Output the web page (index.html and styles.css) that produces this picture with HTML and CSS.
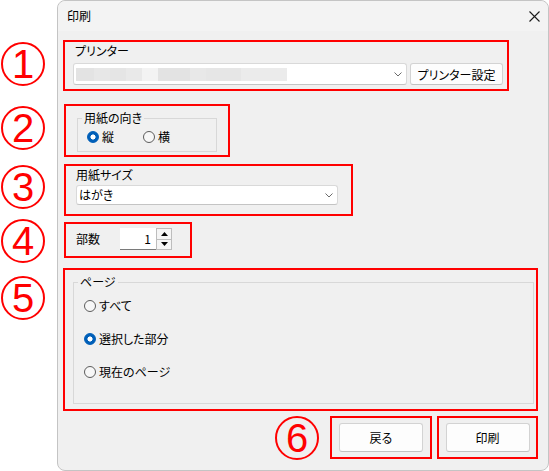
FILE: index.html
```html
<!DOCTYPE html>
<html lang="ja">
<head>
<meta charset="utf-8">
<title>印刷</title>
<link rel="stylesheet" href="styles.css">
</head>
<body>
<div class="page">
  <div class="num num-1">1</div>
  <div class="num num-2">2</div>
  <div class="num num-3">3</div>
  <div class="num num-4">4</div>
  <div class="num num-5">5</div>

  <div class="window">
    <div class="titlebar">
      <span class="title">印刷</span>
      <svg class="close" width="11" height="11" viewBox="0 0 11 11"><path d="M0.5 0.5L10.5 10.5M10.5 0.5L0.5 10.5" stroke="#1a1a1a" stroke-width="1.1" fill="none"/></svg>
    </div>

    <div class="content">
      <section class="mark s1">
        <div class="label">プリンター</div>
        <div class="row">
          <div class="combo combo-printer">
            <div class="blur"></div>
            <svg class="chev" width="8" height="5" viewBox="0 0 8 5"><path d="M0.5 0.5L4 4L7.5 0.5" stroke="#6b6b6b" stroke-width="1" fill="none"/></svg>
          </div>
          <button class="btn btn-setup">プリンター設定</button>
        </div>
      </section>

      <section class="mark s2">
        <fieldset class="group g-orient">
          <legend>用紙の向き</legend>
          <div class="hlist">
            <span class="opt"><span class="radio checked"></span>縦</span>
            <span class="opt"><span class="radio"></span>横</span>
          </div>
        </fieldset>
      </section>

      <section class="mark s3">
        <div class="label">用紙サイズ</div>
        <div class="combo combo-size">
          <span>はがき</span>
          <svg class="chev" width="8" height="5" viewBox="0 0 8 5"><path d="M0.5 0.5L4 4L7.5 0.5" stroke="#6b6b6b" stroke-width="1" fill="none"/></svg>
        </div>
      </section>

      <section class="mark s4">
        <span class="copies-label">部数</span>
        <div class="spin">
          <div class="spin-field">1</div>
          <div class="spin-btns">
            <div class="sb"><svg width="7" height="4" viewBox="0 0 7 4"><path d="M3.5 0L7 4H0Z" fill="#000"/></svg></div>
            <div class="sb"><svg width="7" height="4" viewBox="0 0 7 4"><path d="M0 0H7L3.5 4Z" fill="#000"/></svg></div>
          </div>
        </div>
      </section>

      <section class="mark s5">
        <fieldset class="group g-page">
          <legend>ページ</legend>
          <div class="vlist">
            <span class="opt"><span class="radio"></span>すべて</span>
            <span class="opt"><span class="radio checked"></span>選択した部分</span>
            <span class="opt"><span class="radio"></span>現在のページ</span>
          </div>
        </fieldset>
      </section>

      <div class="footer">
        <div class="num num-6">6</div>
        <div class="mark s6a"><button class="btn btn-action">戻る</button></div>
        <div class="mark s6b"><button class="btn btn-action">印刷</button></div>
      </div>
    </div>
  </div>
</div>
</body>
</html>
```

FILE: styles.css
```css
* { box-sizing: border-box; }

body {
  margin: 0;
  background: #ffffff;
  font-family: "Noto Sans CJK JP", "Yu Gothic UI", sans-serif;
  font-size: 12px;
  color: #000;
  font-feature-settings: "palt";
}

.page {
  position: relative;
  width: 549px;
  height: 471px;
  overflow: hidden;
}

/* annotation circles */
.num {
  width: 44px;
  height: 44px;
  border: 2px solid #ff0000;
  border-radius: 50%;
  color: #ff0000;
  font-family: "Liberation Sans", Arial, sans-serif;
  font-size: 40px;
  line-height: 40px;
  display: flex;
  align-items: center;
  justify-content: center;
  font-feature-settings: normal;
}
.num-1, .num-2, .num-3, .num-4, .num-5 { position: absolute; left: 1px; }
.num-1 { top: 42px; }
.num-2 { top: 106px; }
.num-3 { top: 165px; }
.num-4 { top: 219px; }
.num-5 { top: 276px; }
.num-6 { margin-right: 11px; }

/* window */
.window {
  margin-left: 57px;
  width: 492px;
  height: 471px;
  border: 1px solid #c4c4c4;
  border-radius: 8px;
  background: #f0f0f0;
}

.titlebar {
  height: 30px;
  display: flex;
  align-items: center;
  justify-content: space-between;
  padding: 0 8px 0 9px;
  background: #f3f3f3;
  border-radius: 8px 8px 0 0;
}
.title { line-height: 16px; }

.content { padding: 9px 0 0 5px; }

.mark { border: 2px solid #ff0000; }

.label { line-height: 16px; }

/* section 1 */
.s1 { width: 446px; height: 51px; padding: 1px 0 0 8px; }
.s1 .label { padding-left: 2px; margin-bottom: 4px; }
.row { display: flex; align-items: center; gap: 3px; }

.combo {
  background: #ffffff;
  border: 1px solid #d9d9d9;
  border-bottom-color: #c4c4c4;
  border-radius: 3px;
  display: flex;
  align-items: center;
  justify-content: space-between;
  padding: 0 4px 0 2px;
}
.combo-printer { width: 334px; height: 22px; }
.chev { margin-top: 1px; }

.blur {
  width: 211px;
  height: 13px;
  background: linear-gradient(90deg,
    #e3e3e3 0, #e3e3e3 18px,
    #e7e7e7 18px, #e7e7e7 34px,
    #e5e5e5 34px, #e5e5e5 50px,
    #e9e9e9 50px, #e9e9e9 66px,
    #f3f3f3 66px, #f3f3f3 82px,
    #e3e3e3 82px, #e3e3e3 114px,
    #e8e8e8 114px, #e8e8e8 130px,
    #e6e6e6 130px, #e6e6e6 165px,
    #ebebeb 165px, #ebebeb 211px);
}

.btn {
  font: inherit;
  color: #000;
  background: #fdfdfd;
  border: 1px solid #d3d3d3;
  border-bottom-color: #c2c2c2;
  border-radius: 3px;
  padding: 0;
}
.btn-setup { width: 93px; height: 22px; }

/* group boxes */
.group {
  margin: 0;
  padding: 0;
  min-width: 0;
  border: 1px solid #d8d8d8;
}
.group legend {
  padding: 0 2px;
  margin-left: 4px;
  line-height: 16px;
}

.opt { display: flex; align-items: center; gap: 3px; line-height: 16px; }

.radio {
  width: 12px;
  height: 12px;
  border-radius: 50%;
  border: 1px solid #5c5c5c;
  background: #f7f7f7;
}
.radio.checked {
  border-color: #005fb8;
  background: radial-gradient(circle, #ffffff 0, #ffffff 2.2px, #005fb8 2.9px);
}

/* section 2 */
.s2 { margin: 13px 0 0 1px; width: 166px; height: 53px; padding: 4px 0 0 11px; }
.g-orient { width: 140px; height: 42px; }
.hlist { display: flex; padding: 3px 0 0 9px; }
.hlist .opt + .opt { margin-left: 29px; }

/* section 3 */
.s3 { margin: 7px 0 0 1px; width: 289px; height: 52px; padding: 1px 0 0 10px; }
.combo-size { width: 262px; height: 20px; margin-top: 2px; line-height: 16px; }

/* section 4 */
.s4 { margin: 6px 0 0 1px; width: 128px; height: 36px; padding: 4px 0 0 10px; display: flex; align-items: flex-start; }
.copies-label { line-height: 22px; }
.spin { display: flex; margin-left: 20px; }
.spin-field {
  width: 36px;
  height: 22px;
  background: #ffffff;
  border-bottom: 1px solid #7a7a7a;
  text-align: right;
  padding-right: 5px;
  line-height: 21px;
}
.spin-btns { width: 16px; height: 22px; display: flex; flex-direction: column; }
.sb {
  flex: 1;
  border: 1px solid #bdbdbd;
  background: #f5f5f5;
  display: flex;
  align-items: center;
  justify-content: center;
}
.sb + .sb { border-top: none; }

/* section 5 */
.s5 { margin-top: 10px; width: 475px; height: 143px; padding: 4px 0 0 8px; }
.g-page { width: 461px; height: 130px; }
.vlist { display: flex; flex-direction: column; gap: 17px; padding: 8px 0 0 10px; }

/* footer */
.footer {
  margin-top: 5px;
  width: 475px;
  height: 43px;
  display: flex;
  justify-content: flex-end;
  align-items: center;
}
.s6a, .s6b { height: 43px; display: flex; align-items: center; justify-content: center; }
.s6a { width: 102px; margin-right: 5px; }
.s6b { width: 101px; }
.btn-action { width: 84px; height: 29px; }
```
